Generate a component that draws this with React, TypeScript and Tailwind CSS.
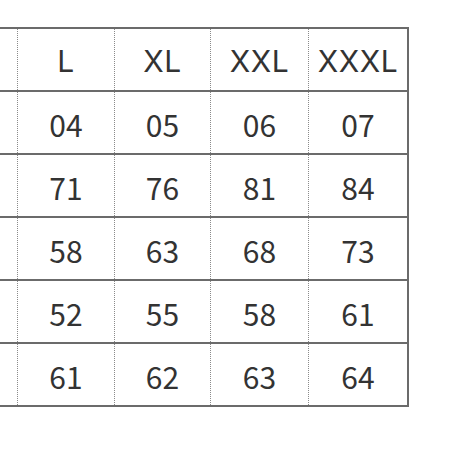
const header = ['L', 'XL', 'XXL', 'XXXL']

const rows = [
  ['04', '05', '06', '07'],
  ['71', '76', '81', '84'],
  ['58', '63', '68', '73'],
  ['52', '55', '58', '61'],
  ['61', '62', '63', '64'],
]

function Row({ cells, head }: { cells: string[]; head?: boolean }) {
  return (
    <div className="grid h-[63px] grid-cols-[18px_97px_96px_98px_98px] border-b-2 border-[#6b6b6b]">
      <div className="border-r border-dotted border-[#8a8a8a]" />
      {cells.map((c, i) => (
        <div
          key={i}
          className={
            'flex items-center justify-center pt-[3px] ' +
            (head ? 'font-[Inter] tracking-[0.5px] ' : '') +
            (i < cells.length - 1 ? 'border-r border-dotted border-[#8a8a8a]' : '')
          }
        >
          {c}
        </div>
      ))}
    </div>
  )
}

export default function App() {
  return (
    <div className="h-[459px] w-[460px] overflow-hidden bg-white pt-[27px]">
      <div
        className="w-[409px] border-t-2 border-r-2 border-[#6b6b6b] text-[30px] leading-none text-[#333]"
        style={{ fontFamily: '"Noto Sans CJK JP", "Noto Sans", sans-serif' }}
      >
        <Row cells={header} head />
        {rows.map((r, i) => (
          <Row key={i} cells={r} />
        ))}
      </div>
    </div>
  )
}
